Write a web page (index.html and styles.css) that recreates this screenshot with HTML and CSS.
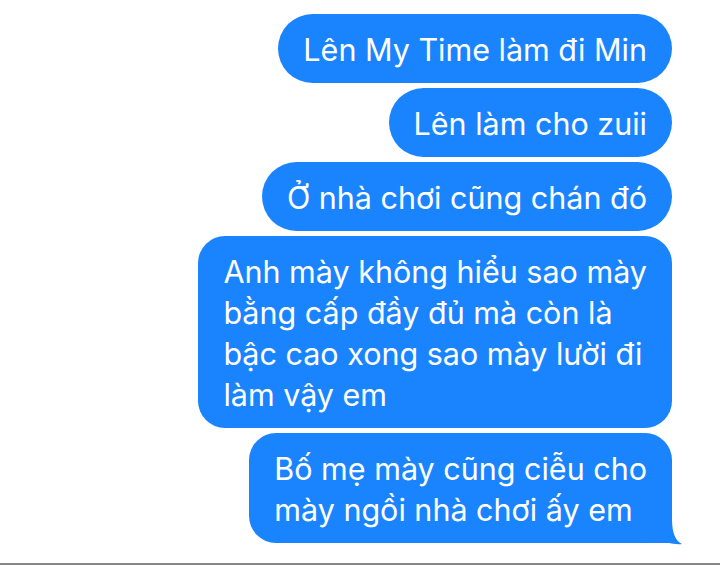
FILE: index.html
```html
<!DOCTYPE html>
<html>

<head>
    <meta charset="UTF-8">
    <meta name="viewport" content="width=device-width, initial-scale=1.0">
    <title>Tin nhắn</title>
    <link rel="stylesheet" href="styles.css">
</head>

<body>
    <div class="screen">
        <div class="thread">
            <div class="bubble">Lên My Time làm đi Min</div>
            <div class="bubble">Lên làm cho zuii</div>
            <div class="bubble">Ở nhà chơi cũng chán đó</div>
            <div class="bubble bubble-block">Anh mày không hiểu sao mày<br>bằng cấp đầy đủ mà còn là<br>bậc cao xong sao mày lười đi<br>làm vậy em</div>
            <div class="bubble bubble-block bubble-last">Bố mẹ mày cũng ciễu cho<br>mày ngồi nhà chơi ấy em
                <svg class="tail" width="44" height="28" viewBox="0 0 44 28">
                    <path d="M32 2 C32 17 36 24 42 27 C34 28 24 25 17 21 C12 24 6 26 0 26 L0 2 Z" fill="#1a84fe" />
                </svg>
            </div>
        </div>
        <div class="divider"></div>
    </div>
</body>

</html>
```
FILE: styles.css
```css
body {
    margin: 0;
    padding: 0;
    background-color: #fff;
    font-family: Inter, "Noto Sans", sans-serif;
}

.screen {
    display: flex;
    flex-direction: column;
    min-height: 100vh;
}

.thread {
    display: flex;
    flex-direction: column;
    align-items: flex-end;
    gap: 5px;
    padding: 14px 48px 0 0;
}

.bubble {
    position: relative;
    background-color: #1a84fe;
    color: #fff;
    font-size: 30.5px;
    line-height: 41px;
    padding: 15px 25px 13px;
    border-radius: 35px;
    white-space: nowrap;
}

.bubble-block {
    border-radius: 27px;
}

.bubble-last {
    border-bottom-right-radius: 0;
}

.tail {
    position: absolute;
    right: -12px;
    bottom: -2px;
}

.divider {
    margin-top: auto;
    height: 2px;
    background-color: #888;
}
```
